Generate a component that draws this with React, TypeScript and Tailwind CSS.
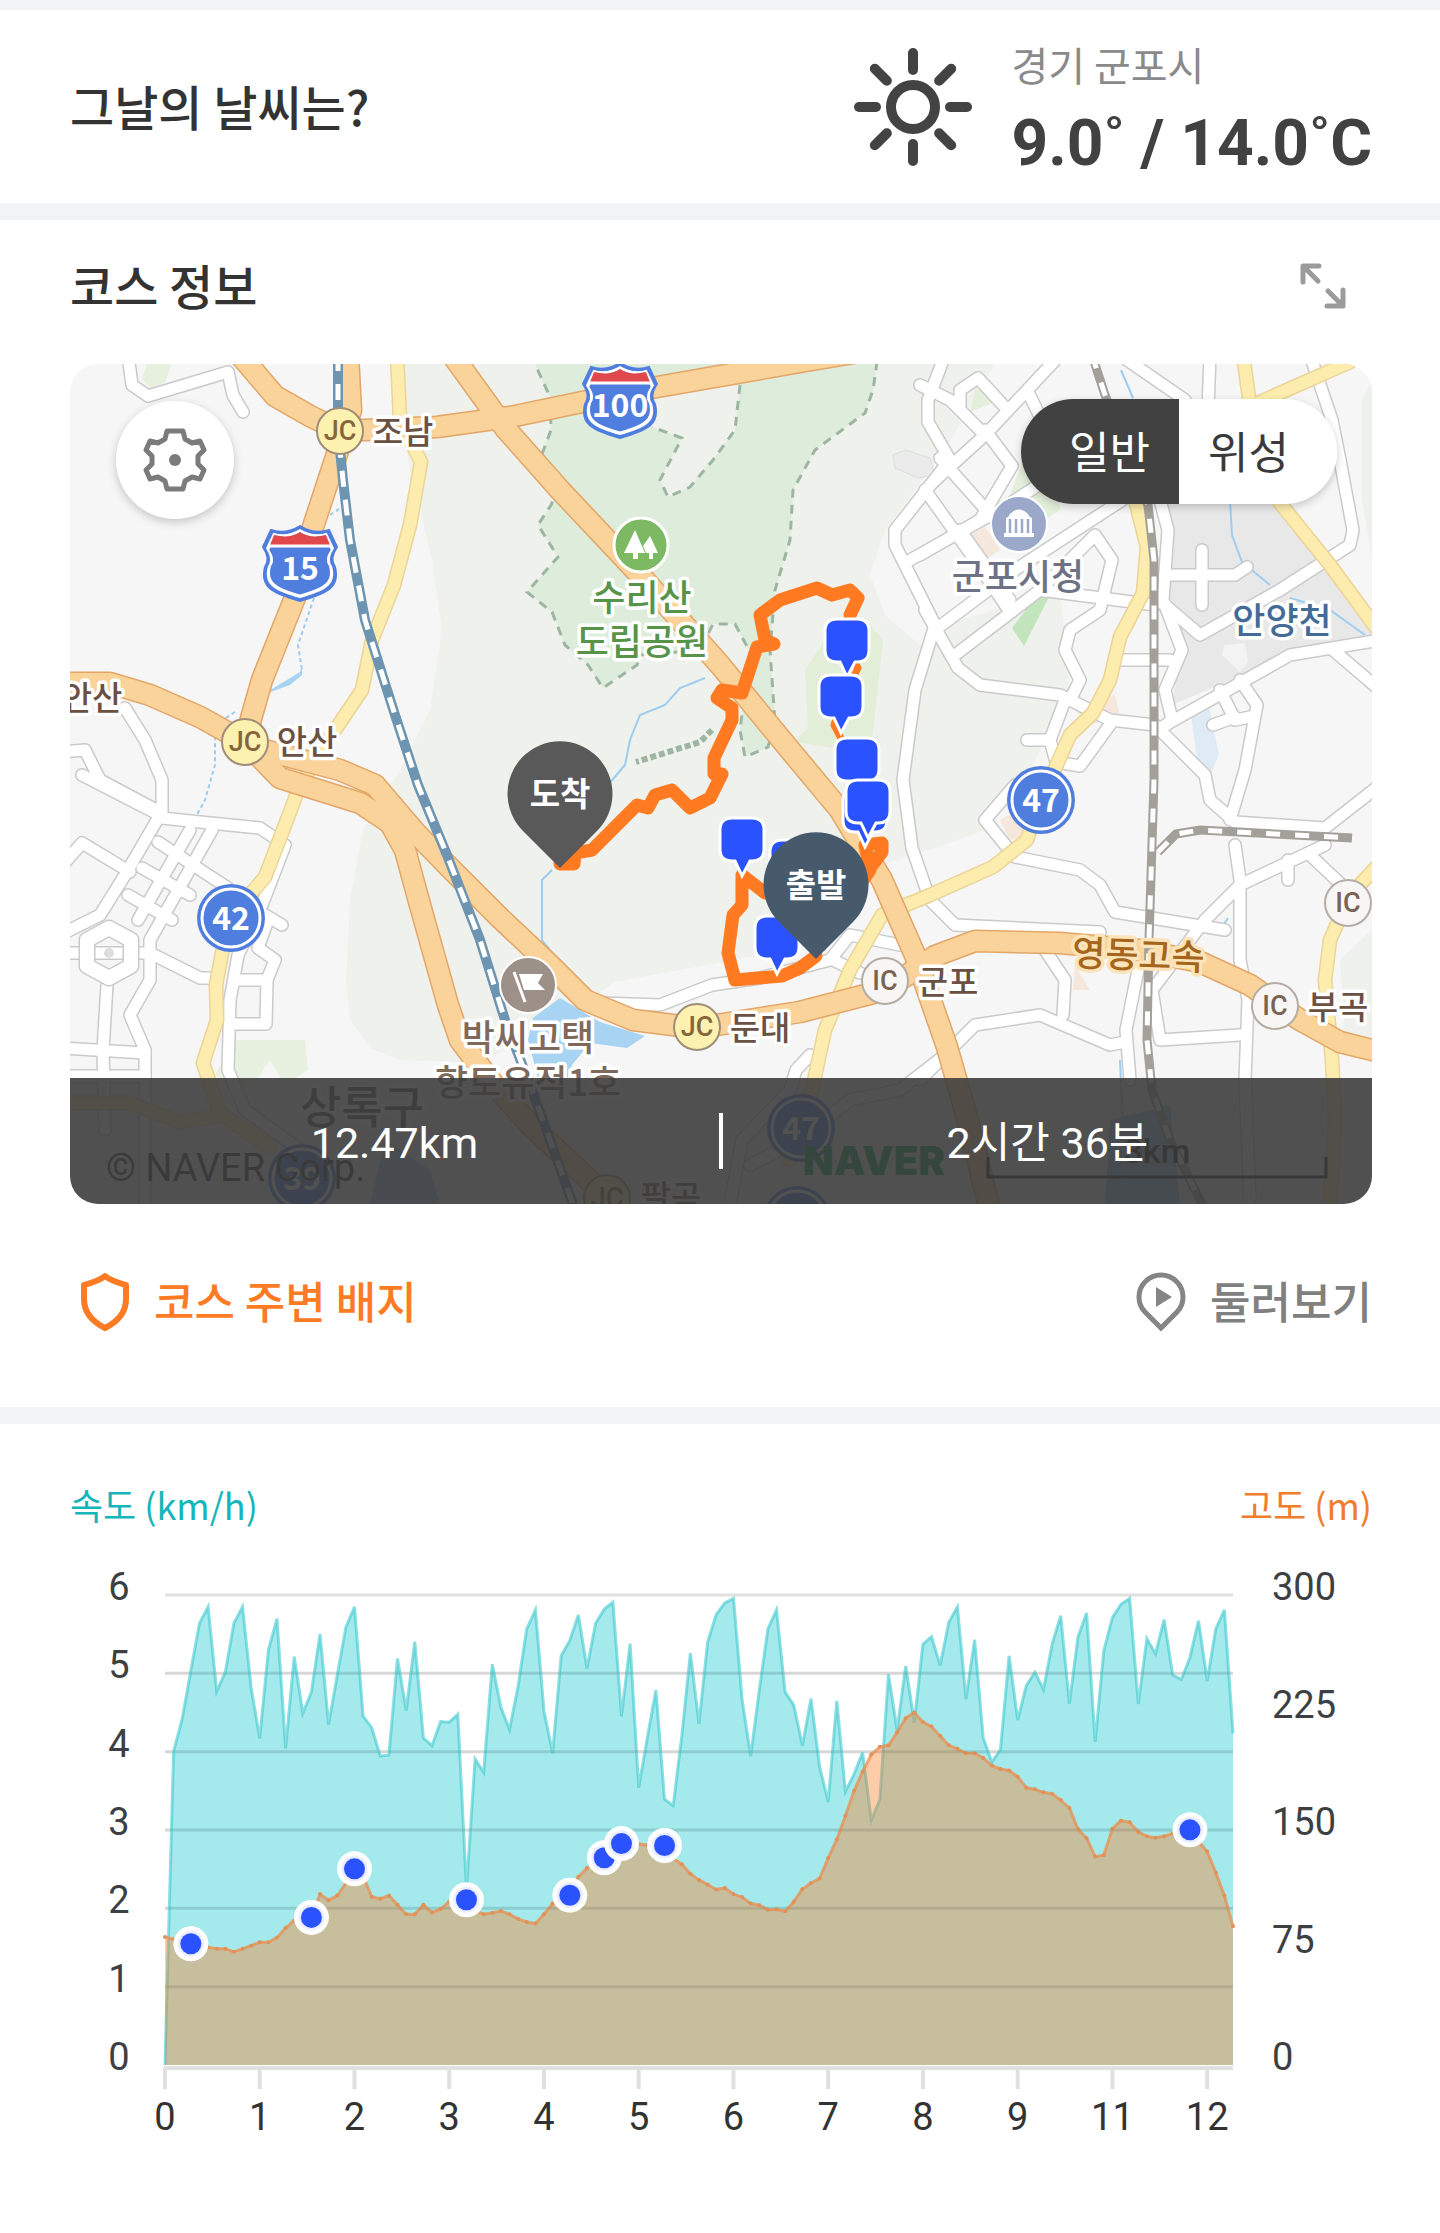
import React from "react";

const KR = "font-['Noto_Sans_CJK_KR','Noto_Sans',sans-serif]";
const LATIN = "font-['Roboto','Noto_Sans_CJK_KR',sans-serif]";

/* ---------- icons ---------- */

function SunIcon() {
  const angles = [0, 45, 90, 135, 180, 225, 270, 315];
  return (
    <svg viewBox="-60 -60 120 120" className="h-[120px] w-[120px]" fill="none" stroke="#434343" strokeWidth="10" strokeLinecap="round" aria-label="맑음" role="img">
      <circle r="22" />
      {angles.map((a) => (
        <path key={a} d="M0 -37V-54" transform={`rotate(${a})`} />
      ))}
    </svg>
  );
}

function ExpandIcon() {
  return (
    <svg viewBox="0 0 48 48" className="h-12 w-12" fill="none" stroke="#9b9b9b" strokeWidth="5" strokeLinecap="round" strokeLinejoin="round" aria-hidden="true">
      <path d="M4 20V4H20M5 5L19 19" />
      <path d="M44 28V44H28M43 43L29 29" />
    </svg>
  );
}

function GearIcon() {
  return (
    <svg viewBox="-34 -34 68 68" className="h-[68px] w-[68px]" aria-hidden="true">
      <path
        d="M-8 -29H8L10 -21L17 -17L25 -19L29 -10L23 -4V4L29 10L25 19L17 17L10 21L8 29H-8L-10 21L-17 17L-25 19L-29 10L-23 4V-4L-29 -10L-25 -19L-17 -17L-10 -21Z"
        fill="none"
        stroke="#7b7b7b"
        strokeWidth="5"
        strokeLinejoin="round"
      />
      <circle r="6" fill="#7b7b7b" />
    </svg>
  );
}

function ShieldIcon() {
  return (
    <svg viewBox="0 0 50 60" className="h-[60px] w-[50px]" fill="none" stroke="#fd7b24" strokeWidth="6" strokeLinejoin="round" aria-hidden="true">
      <path d="M25 4C19 9 11 11 4 13V27C4 41 13 50 25 56C37 50 46 41 46 27V13C39 11 31 9 25 4Z" />
    </svg>
  );
}

function PlayPinIcon() {
  return (
    <svg viewBox="0 0 50 62" className="h-[62px] w-[50px]" aria-hidden="true">
      <path d="M25 57L9 41C4 36 3 31 3 26A22 22 0 0 1 47 26C47 31 46 36 41 41Z" fill="none" stroke="#858585" strokeWidth="5" />
      <path d="M20 16L36 26L20 36Z" fill="#858585" />
    </svg>
  );
}

/* ---------- map ---------- */

const localRoads = [
  "M128 355L132 385L148 396L228 372L233 395L243 412",
  "M60 752L85 750L100 780L160 812",
  "M125 708L145 740L162 780V818L200 822L260 828L285 845L262 905L238 955L230 1000L228 1070L245 1110L300 1150",
  "M82 775L160 815L125 875L100 915L60 935",
  "M60 868L82 843L130 872",
  "M212 830L150 940V980L130 1015L145 1050V1200",
  "M190 830L138 920",
  "M158 842L228 888",
  "M142 868L190 895",
  "M128 895L172 920",
  "M60 953H150L200 978H216",
  "M107 985L103 1050L105 1130",
  "M60 1048L145 1053",
  "M60 1076H145",
  "M265 915L282 925",
  "M268 920L258 948L275 960L267 980H235",
  "M267 980L266 1024H230",
  "M600 1003L660 1005L712 985L760 978L830 960L850 935L900 945",
  "M835 961L860 973",
  "M945 355L928 400V422L950 460L895 530V545L935 625L915 690L903 780L912 848L930 900L955 925L1100 932",
  "M920 385L950 400L985 435L1060 355",
  "M960 408V390L978 378L1003 405",
  "M1028 392L1044 425",
  "M930 485L985 435",
  "M985 430L1012 466L980 520L920 555",
  "M940 458L995 520",
  "M925 490L975 560L1010 612",
  "M910 560L1000 510L1108 440",
  "M960 530L1010 600",
  "M935 630L1015 570L1130 495",
  "M955 655L1040 590L1095 535L1112 560L1100 610L1070 630L1065 650L1080 680L1070 700",
  "M925 610L958 668L980 685L1060 695L1110 720L1155 725",
  "M1040 590L1155 605",
  "M1065 700L1050 740H1027M1050 740L1056 762L1080 766L1112 722",
  "M1160 500L1168 530L1163 600L1182 650L1165 690L1172 720L1160 730",
  "M1165 575H1235L1247 567",
  "M1202 550V605",
  "M1165 605L1200 635L1280 590L1350 545L1353 530L1340 460L1332 420L1310 355",
  "M1160 728L1290 655L1380 640",
  "M1333 650L1380 690",
  "M1220 690L1235 720L1250 717M1235 717L1213 725",
  "M1240 680L1257 705L1245 770L1230 820",
  "M1160 730L1205 775L1210 800L1235 822L1325 828L1380 785",
  "M1120 660H1170",
  "M1120 355L1185 400",
  "M1210 355L1208 410",
  "M1235 845L1240 880V960L1248 1000L1245 1080L1250 1200",
  "M1325 845L1240 885L1205 920L1152 990L1160 1040L1240 1035",
  "M1310 855L1345 888M1288 860V880",
  "M1015 785L985 820L1015 857L1080 870L1100 885L1115 912L1225 930",
  "M1045 950L1065 980L1063 1015",
  "M920 1080L975 1025L1040 1015L1110 1045L1125 1042",
  "M1140 960L1126 1030L1130 1080",
  "M810 1055L796 1070L790 1090L742 1140L730 1204",
  "M945 1055L900 1090L850 1100L800 1140L750 1165",
];

const yellowRoads = [
  "M397 355L400 420L421 462L410 525L394 585L372 640L362 690L335 730L300 785L290 812L265 877L231 917L222 953L216 985L217 1020L203 1063L220 1113L270 1147",
  "M60 1103H130L180 1122L220 1115",
  "M1130 480L1147 547L1143 593L1120 637L1110 680L1093 713L1070 735L1041 800L1027 840L993 867L930 895L882 915L850 970L825 1030L812 1090L790 1160",
  "M1243 355L1255 440L1280 503L1330 565L1385 640",
  "M1350 362L1260 402",
  "M1385 858L1350 895L1330 940L1325 980L1332 1060L1335 1120L1330 1204",
];

const highways = [
  "M240 355L275 396L310 416L340 431L437 427L510 417L640 390L800 362L900 345",
  "M445 345L505 428L560 490L640 575L720 665L790 750L840 810L882 880L915 955L947 1047L965 1110L990 1210",
  "M348 355L351 410L335 460L312 530L298 590L262 680L252 715L245 742",
  "M60 683H110L150 695L200 717L245 742L280 778L360 803L390 823L405 850L420 905L448 1005L460 1040L490 1080L530 1125L600 1190",
  "M245 745L340 770L375 785L415 832L450 868L500 918L550 965L585 1000L633 1020L697 1028L800 1012L885 990L935 956L975 941L1060 943L1140 950L1200 962L1250 985L1300 1020L1340 1042L1380 1052",
];

const blueRail = "M338 355V430L343 480L350 540L365 620L395 715L418 785L447 855L480 940L505 1020L530 1085L550 1140L575 1210";
const grayRails = [
  "M1092 355L1105 395L1148 505L1154 560V780L1149 940L1147 1040L1152 1090L1170 1140L1205 1210",
  "M1158 852L1176 834L1200 830L1352 838",
];

const park =
  "M531 355L550 397L551 430L541 457L560 485L551 505L538 525L558 557L527 592L552 612L565 645L588 665L603 688L637 665L640 655L700 650L713 624H735L750 652L740 730L745 757L768 747L775 722L770 650L775 590L790 540L793 490L815 450L865 413L873 390L878 355";

const route =
  "M816 956L800 968L782 976L735 980L728 953L733 915L742 905V875L765 893M832 925L870 870L865 845L882 843V852L870 868M850 615L858 598L850 590L832 595L817 588L780 600L760 615L765 640L774 644L757 647L742 693L722 690L717 698L732 708V720L714 758V774H722L710 798L690 808L672 790L655 795L648 808L637 805L592 850L575 853L574 864H560";
const routeRidge = "M850 615L848 650L858 668L842 700L834 725L843 742L850 780L868 845";

function RoadSet({ paths, casing, fill, width }: { paths: string[]; casing: string; fill: string; width: number }) {
  return (
    <g fill="none" strokeLinejoin="round" strokeLinecap="round">
      {paths.map((d) => (
        <path key={d} d={d} stroke={casing} strokeWidth={width + 3} />
      ))}
      {paths.map((d) => (
        <path key={d} d={d} stroke={fill} strokeWidth={width} />
      ))}
    </g>
  );
}

function HighwayShield({ x, y, label }: { x: number; y: number; label: string }) {
  const d =
    "M-29 -33Q-15 -28 0 -37Q15 -28 29 -33L37 -16Q29 -4 35 4C40 24 28 30 0 38C-28 30 -40 24 -35 4Q-29 -4 -37 -16Z";
  return (
    <g transform={`translate(${x} ${y})`}>
      <path d={d} fill="#4f7ede" stroke="#4f7ede" strokeWidth="2" />
      <path d={d} fill="#fff" transform="scale(.92)" />
      <path d={d} fill="#4f7ede" transform="scale(.83)" />
      <path d="M-30 -18L-26 -28Q-10 -24 0 -31Q10 -24 26 -28L30 -18Z" fill="#e1484c" />
      <path d="M-31 -17H31" stroke="#fff" strokeWidth="3" />
      <text y="17" textAnchor="middle" className={`${KR} text-[32px] font-bold`} fill="#fff">
        {label}
      </text>
    </g>
  );
}

function RouteBadge({ x, y, label }: { x: number; y: number; label: string }) {
  return (
    <g transform={`translate(${x} ${y})`}>
      <circle r="34" fill="#4f7ede" />
      <circle r="29" fill="#4f7ede" stroke="#fff" strokeWidth="3" />
      <text y="12" textAnchor="middle" className={`${KR} text-[32px] font-bold`} fill="#fff">
        {label}
      </text>
    </g>
  );
}

function Junction({ x, y, kind }: { x: number; y: number; kind: "JC" | "IC" }) {
  return (
    <g transform={`translate(${x} ${y})`}>
      <circle r="23" fill={kind === "JC" ? "#fdf1b0" : "#f7f6f4"} stroke={kind === "JC" ? "#a08d78" : "#b5aca4"} strokeWidth="2" />
      <text y="9" textAnchor="middle" className={`${LATIN} text-[27px] font-medium`} fill={kind === "JC" ? "#86653c" : "#7a6355"}>
        {kind}
      </text>
    </g>
  );
}

function MapLabel({ x, y, size = "text-[33px]", color = "#6b5143", halo = "#fff", rotate = 0, children }: { x: number; y: number; size?: string; color?: string; halo?: string; rotate?: number; children: string }) {
  return (
    <text x={x} y={y} className={`${KR} ${size} font-medium`} fill={color} stroke={halo} strokeWidth="7" strokeLinejoin="round" paintOrder="stroke" textAnchor="middle" transform={`rotate(${rotate} ${x} ${y})`}>
      {children}
    </text>
  );
}

function PhotoMarker({ x, y }: { x: number; y: number }) {
  return (
    <path
      transform={`translate(${x} ${y})`}
      d="M-10 -22H10Q22 -22 22 -10V9Q22 21 10 21H8L0 36L-7 21H-10Q-22 21 -22 9V-10Q-22 -22 -10 -22Z"
      fill="#2a52ff"
      stroke="#fff"
      strokeWidth="3"
    />
  );
}

function EndPin({ x, y, fill, label }: { x: number; y: number; fill: string; label: string }) {
  return (
    <g transform={`translate(${x} ${y})`}>
      <path d="M0 74L-36 38A52.5 52.5 0 1 1 36 38Z" fill={fill} />
      <text y="12" textAnchor="middle" className={`${KR} text-[33px] font-bold`} fill="#fff">
        {label}
      </text>
    </g>
  );
}

const photoSpots = [
  [847, 641],
  [841, 697],
  [865, 811],
  [857, 760],
  [868, 802],
  [742, 840],
  [792, 862],
  [777, 938],
];

function CourseMap() {
  return (
    <svg viewBox="70 364 1302 840" className="block h-auto w-full" role="img" aria-label="코스 지도">
      <rect x="70" y="364" width="1302" height="840" fill="#f6f6f6" />
      <path d="M403 355L408 460L432 560L442 630L430 710L400 770L363 830L350 900L346 980L350 1020L370 1048L400 1060L480 1063L560 1020L615 982L760 955L880 865L930 850L985 830L1020 790L1045 740L1060 690L1040 610L960 625L920 645L885 615L870 575L885 530L945 450L1000 355Z" fill="#eff1ec" />
      <path d="M1362 400L1372 380V560L1362 500ZM1340 960L1372 930V1040L1345 1035Z" fill="#eef1ec" />
      <path d="M945 625L1060 590L1070 690L980 685Z" fill="#eff1ec" />
      <path d={`${park}Z`} fill="#deecdc" />
      <path d="M740 385L735 430L713 460L690 487L668 497L660 480L682 438L652 427L620 395Z" fill="#eff1ec" />
      <g fill="none" stroke="#9db6a1" strokeWidth="3" strokeDasharray="9 7">
        <path d={park} />
        <path d="M740 385L735 430L713 460L690 487L668 497L660 480L682 438L652 427" />
        <path d="M712 730L700 742L636 762" strokeWidth="6" strokeDasharray="6 3" />
      </g>
      <path d="M142 378L150 355H175L165 382L150 388Z" fill="#e6f0dd" />
      <path d="M870 625L883 640L872 740L845 750L795 742L808 728L805 670L825 640Z" fill="#e3eed9" />
      <path d="M975 390L990 388L996 402L970 412ZM1010 495L1030 440L1060 480L1060 510L1030 530Z" fill="#e4efdb" />
      <path d="M1037 595H1050L1024 646L1012 628Z" fill="#c3e5bd" />
      <path d="M965 538L985 527L1000 550L985 560ZM1075 710L1115 695L1120 715L1090 725ZM1000 820L1020 810L1030 835L1010 840ZM1075 965L1090 990L1073 990Z" fill="#f5e7dc" />
      <path d="M235 1040H305L308 1070L285 1085L270 1060L250 1090L215 1075Z" fill="#e8f0df" />
      <path d="M1165 500H1272L1385 640L1290 655L1172 705L1180 655L1163 600Z" fill="#e8e8e8" />
      <path d="M1224 645L1245 643L1248 662L1240 672L1222 655Z" fill="#f3f3f3" />
      <path d="M1190 708L1208 702L1219 755L1210 775L1198 765Z" fill="#dfeaf5" />
      <path d="M893 455L905 450L930 458L935 475L918 478L895 468Z" fill="#eaebea" stroke="#dcdedc" strokeWidth="1" />
      <path d="M533 1018L560 998L600 1022L645 1036L627 1048L590 1043L572 1065L565 1085H540L528 1040ZM385 1140L430 1170L440 1204H370Z" fill="#a8d3f2" />
      <path d="M1110 1120L1170 1105L1180 1204H1105Z" fill="#9cc4ee" />
      <g fill="none" stroke="#9dcdf0" strokeWidth="2">
        <path d="M705 678L680 688L665 705L640 715L630 740L625 765L608 785M552 870L542 880V940L558 960" />
        <path d="M345 505L330 515M314 598L298 645L302 670" strokeDasharray="4 3" />
        <path d="M302 665V675L290 685L262 695L300 672Z" fill="#a8d3f2" stroke="none" />
        <path d="M235 712L215 725V765L205 800L195 818" strokeDasharray="4 3" />
        <path d="M1121 370L1133 398M1230 500L1232 535L1242 562L1270 585M1290 598L1330 610L1365 635M1120 1060L1125 1180M1228 918L1220 930" />
      </g>

      <RoadSet paths={localRoads} casing="#cacaca" fill="#ffffff" width={11} />
      <g fill="none" strokeLinejoin="round">
        <path d="M109 928L131 940V966L109 978L87 966V940Z" stroke="#cacaca" strokeWidth="17" />
        <path d="M109 928L131 940V966L109 978L87 966V940Z" stroke="#fff" strokeWidth="14" />
        <circle cx="109" cy="953" r="5" fill="#ddd" />
      </g>
      <RoadSet paths={yellowRoads} casing="#ecd497" fill="#fcecae" width={12} />
      <RoadSet paths={highways} casing="#e3a668" fill="#f9d399" width={20} />
      <g fill="none">
        {grayRails.map((d) => (
          <React.Fragment key={d}>
            <path d={d} stroke="#a3a09a" strokeWidth="9" />
            <path d={d} stroke="#fff" strokeWidth="5" strokeDasharray="14 15" />
          </React.Fragment>
        ))}
        <path d={blueRail} stroke="#6d95b1" strokeWidth="10" />
        <path d={blueRail} stroke="#fff" strokeWidth="5" strokeDasharray="16 13" />
      </g>

      <HighwayShield x={300} y={563} label="15" />
      <HighwayShield x={620} y={400} label="100" />
      <RouteBadge x={231} y={918} label="42" />
      <RouteBadge x={1041} y={800} label="47" />
      <RouteBadge x={302} y={1178} label="39" />
      <RouteBadge x={801} y={1128} label="47" />
      <RouteBadge x={797} y={1220} label="" />

      <g transform="translate(641 545)">
        <circle r="27" fill="#7cb962" stroke="#fff" strokeWidth="3" />
        <path d="M-6 -15L4 8H-3V14H-8V8H-17ZM9 -9L17 8H12V14H8V8H5L2 1Z" fill="#fff" />
      </g>
      <g transform="translate(1019 524)">
        <circle r="28" fill="#9ba8ca" stroke="#fff" strokeWidth="2" />
        <path d="M-15 13H15V9H13V-6Q10 -7 9 -10Q0 -19 -9 -10Q-10 -7 -13 -6V9H-15Z" fill="#fff" />
        <path d="M-9 -5V9M-3 -5V9M3 -5V9M9 -5V9" stroke="#9ba8ca" strokeWidth="2.5" />
      </g>
      <g transform="translate(528 985)">
        <circle r="28" fill="#9d9088" stroke="#fff" strokeWidth="2" />
        <path d="M-14 -13L-3 17" stroke="#fff" strokeWidth="3" />
        <path d="M-9 -11H15L10 -2L17 5H-4Z" fill="#fff" />
      </g>

      <MapLabel x={403} y={444}>조남</MapLabel>
      <MapLabel x={307} y={754}>안산</MapLabel>
      <MapLabel x={92} y={710}>안산</MapLabel>
      <MapLabel x={760} y={1040}>둔대</MapLabel>
      <MapLabel x={948} y={994}>군포</MapLabel>
      <MapLabel x={1338} y={1019}>부곡</MapLabel>
      <MapLabel x={642} y={611} size="text-[36px]" color="#57944a">수리산</MapLabel>
      <MapLabel x={642} y={655} size="text-[36px]" color="#57944a">도립공원</MapLabel>
      <MapLabel x={1018} y={590} size="text-[36px]" color="#6d7284">군포시청</MapLabel>
      <MapLabel x={1282} y={634} size="text-[36px]" color="#446a98">안양천</MapLabel>
      <MapLabel x={1138} y={968} size="text-[36px]" color="#a5661c" halo="#fbe3ba" rotate={2}>영동고속</MapLabel>
      <MapLabel x={528} y={1051} size="text-[36px]" color="#7d6a5d">박씨고택</MapLabel>
      <MapLabel x={528} y={1096} size="text-[36px]" color="#7d6a5d">향토유적1호</MapLabel>
      <MapLabel x={362} y={1124} size="text-[45px]" color="#555">상록구</MapLabel>
      <MapLabel x={671} y={1209}>팔곡</MapLabel>
      <Junction x={340} y={431} kind="JC" />
      <Junction x={245} y={742} kind="JC" />
      <Junction x={697} y={1027} kind="JC" />
      <Junction x={607} y={1198} kind="JC" />
      <Junction x={885} y={981} kind="IC" />
      <Junction x={1348} y={903} kind="IC" />
      <Junction x={1275} y={1006} kind="IC" />

      <text x="106" y="1181" className={`${LATIN} text-[38px]`} fill="#333">© NAVER Corp.</text>
      <text x="803" y="1175" className="font-['Inter',sans-serif] text-[40px] font-black" fill="#03a04a">NAVER</text>
      <text x="1157" y="1163" textAnchor="middle" className={`${LATIN} text-[34px] font-medium`} fill="#222">3km</text>
      <path d="M988 1157V1177H1326V1157" fill="none" stroke="#222" strokeWidth="3" />

      <g fill="none" stroke="#ff7a20" strokeLinecap="round" strokeLinejoin="round">
        <path d={routeRidge} strokeWidth="7" />
        <path d={route} strokeWidth="13" />
      </g>
      {photoSpots.map(([x, y]) => (
        <PhotoMarker key={`${x}-${y}`} x={x} y={y} />
      ))}
      <EndPin x={560} y={794} fill="#595959" label="도착" />
      <EndPin x={816} y={885} fill="#465a6c" label="출발" />
    </svg>
  );
}

/* ---------- chart ---------- */

// Both traces are sampled on the same vertical raster: 91 is the top grid line, 1320 the baseline.
const RASTER_TOP = 91;
const RASTER_BASE = 1320;

const speed = [
  1320, 500, 415, 290, 165, 122, 343, 293, 165, 122, 333, 466, 235, 153, 492, 252, 400, 345, 193, 430, 300, 175, 122, 408,
  438, 512, 510, 257, 393, 213, 465, 485, 422, 424, 403, 860, 520, 555, 272, 385, 443, 330, 180, 130, 395, 505, 250, 210,
  143, 283, 165, 128, 110, 408, 218, 595, 465, 340, 625, 642, 460, 243, 428, 215, 142, 112, 100, 365, 512, 340, 180, 130,
  345, 378, 485, 362, 540, 632, 368, 605, 560, 503, 680, 625, 298, 445, 277, 425, 220, 200, 275, 162, 122, 363, 208, 465,
  528, 495, 250, 418, 328, 293, 338, 220, 145, 375, 200, 138, 475, 237, 150, 115, 100, 376, 205, 245, 155, 300, 312, 255,
  158, 316, 180, 130, 453,
];

const elevation = [
  985, 991, 1000, 1003, 1008, 1012, 1016, 1016, 1024, 1016, 1008, 999, 999, 987, 962, 942, 938, 934, 873, 889, 877, 845,
  807, 825, 880, 885, 877, 901, 926, 926, 901, 921, 912, 893, 895, 888, 915, 926, 922, 917, 926, 938, 946, 950, 926, 898,
  885, 876, 828, 805, 790, 778, 755, 741, 741, 742, 745, 746, 746, 780, 795, 820, 836, 848, 861, 857, 873, 881, 898, 902,
  914, 913, 918, 893, 860, 844, 832, 779, 730, 668, 603, 553, 508, 488, 484, 450, 413, 398, 423, 435, 460, 484, 493, 505,
  505, 517, 537, 546, 550, 566, 595, 599, 607, 611, 627, 648, 703, 727, 775, 771, 702, 681, 685, 710, 722, 726, 722, 714,
  708, 705, 735, 762, 817, 877, 957,
];

const photoSamples = [3, 17, 22, 35, 47, 51, 53, 58, 119];
const distanceTicks = ["0", "1", "2", "3", "4", "5", "6", "7", "8", "9", "11", "12"];
const speedTicks = ["6", "5", "4", "3", "2", "1", "0"];
const elevationTicks = ["300", "225", "150", "75", "0"];

const PLOT = { left: 165, right: 1233, top: 1595, bottom: 2065 };
const px = (i: number) => PLOT.left + (i * (PLOT.right - PLOT.left)) / (speed.length - 1);
const py = (v: number) => PLOT.top + ((v - RASTER_TOP) / (RASTER_BASE - RASTER_TOP)) * (PLOT.bottom - PLOT.top);
const line = (values: number[]) => values.map((v, i) => `${i ? "L" : "M"}${px(i).toFixed(1)} ${py(v).toFixed(1)}`).join("");
const area = (values: number[]) => `${line(values)}L${PLOT.right} ${PLOT.bottom}H${PLOT.left}Z`;

function Chart() {
  const step = (PLOT.bottom - PLOT.top) / 6;
  const quarter = (PLOT.bottom - PLOT.top) / 4;
  return (
    <svg viewBox="70 1560 1302 600" className="block h-auto w-full" role="img" aria-label="속도와 고도 그래프">
      {speedTicks.map((t, i) => (
        <g key={t}>
          {i < 6 && <path d={`M${PLOT.left} ${PLOT.top + i * step}H${PLOT.right}`} stroke="#e0e0e0" strokeWidth="3" />}
          <text x="119" y={PLOT.top + i * step + 5} textAnchor="middle" className={`${LATIN} text-[38px]`} fill="#3d4043">
            {t}
          </text>
        </g>
      ))}
      {elevationTicks.map((t, i) => (
        <text key={t} x="1272" y={PLOT.top + i * quarter + 5} className={`${LATIN} text-[38px]`} fill="#3d4043">
          {t}
        </text>
      ))}
      <path d={area(speed)} fill="#10c4ca" fillOpacity=".38" />
      <path d={line(speed)} fill="none" stroke="#3fc9cf" strokeOpacity=".6" strokeWidth="3" />
      <path d={area(elevation)} fill="#ff7a20" fillOpacity=".38" />
      <path d={line(elevation)} fill="none" stroke="#ee8a48" strokeOpacity=".7" strokeWidth="3" strokeLinejoin="round" />
      {elevation.map((v, i) => (
        <circle key={i} cx={px(i)} cy={py(v)} r="2" fill="#e39157" />
      ))}
      {speedTicks.slice(1, 6).map((t, i) => (
        <path key={t} d={`M${PLOT.left} ${PLOT.top + (i + 1) * step}H${PLOT.right}`} stroke="#444" strokeOpacity=".05" strokeWidth="3" />
      ))}
      <path d={`M${PLOT.left - 1} 2068H${PLOT.right}`} stroke="#e0e0e0" strokeWidth="4" />
      {distanceTicks.map((t, i) => (
        <g key={t}>
          <path d={`M${px(i * 11)} 2068V2089`} stroke="#e0e0e0" strokeWidth="4" />
          <text x={px(i * 11)} y="2130" textAnchor="middle" className={`${LATIN} text-[38px]`} fill="#333">
            {t}
          </text>
        </g>
      ))}
      {photoSamples.map((i) => (
        <g key={i} transform={`translate(${px(i)} ${py(elevation[i])})`}>
          <circle r="17.5" fill="#fff" />
          <circle r="13" fill="#e9edff" />
          <circle r="10.5" fill="#2a52ff" />
        </g>
      ))}
    </svg>
  );
}

/* ---------- page ---------- */

export default function App() {
  const [mapKind, setMapKind] = React.useState("normal");
  const pill = (kind: string) => (mapKind === kind ? "bg-[#414141] text-white" : "bg-white text-[#3a3a3a]");
  return (
    <main className={`min-h-screen w-full bg-white text-[#333] ${KR}`}>
      <div className="h-[10px] bg-[#f1f3f5]" />

      <section className="flex items-center justify-between pt-[27px] pr-[68px] pb-[22px] pl-[70px]">
        <h2 className="pb-2 text-5xl leading-[60px] font-medium">그날의 날씨는?</h2>
        <div className="flex items-center gap-[38px]">
          <div className="pb-1">
            <SunIcon />
          </div>
          <div>
            <p className="text-[40px] leading-[54px] text-[#8a8a8a]">경기 군포시</p>
            <p className={`mt-4 text-[64px] leading-[74px] font-bold text-[#414141] ${LATIN}`}>9.0˚ / 14.0˚C</p>
          </div>
        </div>
      </section>

      <div className="h-[17px] bg-[#f1f3f5]" />

      <section className="pr-[68px] pl-[70px]">
        <div className="flex items-center justify-between pt-9 pr-[25px]">
          <h2 className="pb-1 text-5xl leading-[56px] font-medium">코스 정보</h2>
          <button type="button" aria-label="지도 확대">
            <ExpandIcon />
          </button>
        </div>

        <div className="relative mt-12 overflow-hidden rounded-[28px]">
          <CourseMap />
          <button
            type="button"
            aria-label="지도 설정"
            className="absolute top-[37px] left-[46px] flex h-[118px] w-[118px] items-center justify-center rounded-full bg-white shadow-[0_3px_10px_rgba(0,0,0,0.2)]"
          >
            <GearIcon />
          </button>
          <div className="absolute top-[35px] right-[35px] flex h-[105px] overflow-hidden rounded-full text-[44px] leading-[60px] shadow-[0_3px_8px_rgba(0,0,0,0.2)]">
            <button type="button" onClick={() => setMapKind("normal")} className={`pr-[29px] pb-1 pl-12 ${pill("normal")}`}>
              일반
            </button>
            <button type="button" onClick={() => setMapKind("satellite")} className={`pr-12 pb-1 pl-[29px] ${pill("satellite")}`}>
              위성
            </button>
          </div>
          <div className={`absolute inset-x-0 bottom-0 flex h-[126px] items-center bg-[rgba(60,60,60,0.89)] text-center text-[43px] text-white ${LATIN}`}>
            <span className="flex-1 pt-1">12.47km</span>
            <span className="h-14 w-1 bg-white" />
            <span className="flex-1 pt-1">2시간 36분</span>
          </div>
        </div>

        <div className="flex items-center justify-between pt-[66px] pb-[73px] text-[44px] leading-[60px] font-medium">
          <button type="button" className="flex items-center gap-6 pl-[10px] text-[#fd7b24]">
            <ShieldIcon />
            <span className="pb-1">코스 주변 배지</span>
          </button>
          <button type="button" className="flex items-center gap-6 text-[#808080]">
            <PlayPinIcon />
            <span className="pb-1">둘러보기</span>
          </button>
        </div>
      </section>

      <div className="h-[17px] bg-[#f1f3f5]" />

      <section className="pt-[54px] pr-[68px] pb-[73px] pl-[70px]">
        <div className="flex items-center justify-between text-4xl leading-[52px]">
          <span className="text-[#16b5ba]">속도 (km/h)</span>
          <span className="text-[#f07d2e]">고도 (m)</span>
        </div>
        <div className="mt-[30px]">
          <Chart />
        </div>
      </section>
    </main>
  );
}
